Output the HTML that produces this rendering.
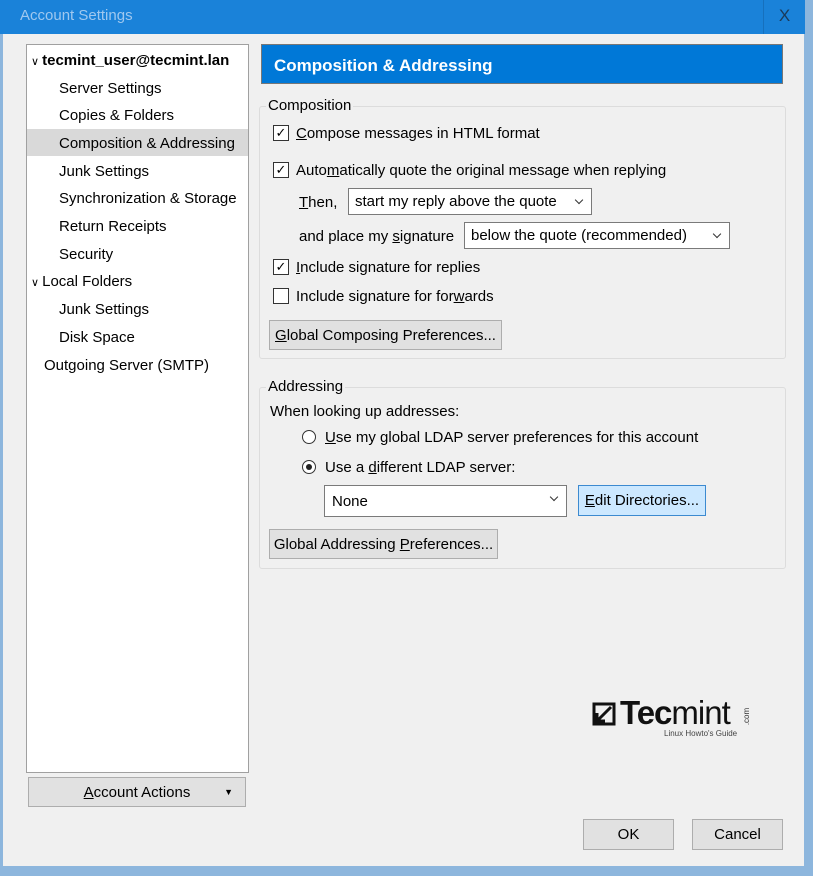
<!DOCTYPE html>
<html><head><style>
*{box-sizing:border-box;margin:0;padding:0}
body{width:816px;height:876px;position:relative;overflow:hidden;background:#fff;font-family:"Liberation Sans",sans-serif;font-size:15px;color:#000}
.a{position:absolute}
.win{left:0;top:0;width:813px;height:876px;background:#8db6dd}
.inner{left:3px;top:34px;width:801px;height:832px;background:#f0f0f0}
.title{left:0;top:0;width:805px;height:34px;background:#1a82d9;color:#9fc8ef;font-size:15px;padding:7px 0 0 20px}
.close{left:763px;top:0;width:42px;height:34px;border-left:1px solid #1670bd;color:#1a3a5a;font-size:17px;text-align:center;padding-top:6px}
.tree{left:26px;top:44px;width:223px;height:729px;background:#fff;border:1px solid #a0a0a0}
.ti{position:absolute;left:0;width:221px;height:27px;line-height:29px;white-space:nowrap}
.btn{position:absolute;background:#e1e1e1;border:1px solid #adadad;text-align:center;line-height:29px}
.hdr{left:261px;top:44px;width:522px;height:40px;background:#0078d7;border:1px solid #777;color:#fff;font-weight:bold;font-size:17px;padding:11px 0 0 12px}
.grp{position:absolute;border:1px solid #dcdcdc;border-radius:3px}
.leg{position:absolute;background:#f0f0f0;padding:0 2px}
.cb{position:absolute;width:16px;height:16px;border:1px solid #333;background:#fff;font-size:13px;line-height:14px;text-align:center}
.sel{position:absolute;background:#fff;border:1px solid #7a7a7a;height:27px;line-height:26px;padding-left:6px;white-space:nowrap}
.sel:after{content:"";position:absolute;right:9px;top:8px;width:5px;height:5px;border-right:1.5px solid #333;border-bottom:1.5px solid #333;transform:rotate(45deg)}
.rd{position:absolute;width:14px;height:14px;border:1px solid #333;border-radius:50%;background:#fff}
.t{position:absolute;white-space:nowrap}
u{text-decoration:underline}
</style></head><body>
<div class="a win"></div>
<div class="a inner"></div>
<div class="a title">Account Settings</div>
<div class="a close">X</div>
<div class="a tree">
<div class="ti" style="top:1px;left:4px;font-weight:bold"><span style="font-weight:normal;font-size:11px">&#8744; </span>tecmint_user@tecmint.lan</div>
<div class="ti" style="top:29px;padding-left:32px">Server Settings</div>
<div class="ti" style="top:56px;padding-left:32px">Copies &amp; Folders</div>
<div class="ti" style="top:84px;padding-left:32px;background:#d9d9d9">Composition &amp; Addressing</div>
<div class="ti" style="top:112px;padding-left:32px">Junk Settings</div>
<div class="ti" style="top:139px;padding-left:32px">Synchronization &amp; Storage</div>
<div class="ti" style="top:167px;padding-left:32px">Return Receipts</div>
<div class="ti" style="top:195px;padding-left:32px">Security</div>
<div class="ti" style="top:222px;left:4px"><span style="font-size:11px">&#8744; </span>Local Folders</div>
<div class="ti" style="top:250px;padding-left:32px">Junk Settings</div>
<div class="ti" style="top:278px;padding-left:32px">Disk Space</div>
<div class="ti" style="top:306px;padding-left:17px">Outgoing Server (SMTP)</div>
</div>
<div class="btn" style="left:28px;top:777px;width:218px;height:30px"><u>A</u>ccount Actions<span style="position:absolute;right:12px;font-size:9px">&#9660;</span></div>
<div class="a hdr">Composition &amp; Addressing</div>

<div class="grp" style="left:259px;top:106px;width:527px;height:253px"></div>
<div class="leg" style="left:266px;top:97px">Composition</div>
<div class="cb" style="left:273px;top:125px">&#10003;</div><div class="t" style="left:296px;top:125px"><u>C</u>ompose messages in HTML format</div>
<div class="cb" style="left:273px;top:162px">&#10003;</div><div class="t" style="left:296px;top:162px">Auto<u>m</u>atically quote the original message when replying</div>
<div class="t" style="left:299px;top:194px"><u>T</u>hen,</div>
<div class="sel" style="left:348px;top:188px;width:244px">start my reply above the quote</div>
<div class="t" style="left:299px;top:228px">and place my <u>s</u>ignature</div>
<div class="sel" style="left:464px;top:222px;width:266px">below the quote (recommended)</div>
<div class="cb" style="left:273px;top:259px">&#10003;</div><div class="t" style="left:296px;top:259px"><u>I</u>nclude signature for replies</div>
<div class="cb" style="left:273px;top:288px"></div><div class="t" style="left:296px;top:288px">Include signature for for<u>w</u>ards</div>
<div class="btn" style="left:269px;top:320px;width:233px;height:30px"><u>G</u>lobal Composing Preferences...</div>

<div class="grp" style="left:259px;top:387px;width:527px;height:182px"></div>
<div class="leg" style="left:266px;top:378px">Addressing</div>
<div class="t" style="left:270px;top:403px">When looking up addresses:</div>
<div class="rd" style="left:302px;top:430px"></div><div class="t" style="left:325px;top:429px"><u>U</u>se my global LDAP server preferences for this account</div>
<div class="rd" style="left:302px;top:460px"><div style="position:absolute;left:3px;top:3px;width:6px;height:6px;border-radius:50%;background:#222"></div></div><div class="t" style="left:325px;top:459px">Use a <u>d</u>ifferent LDAP server:</div>
<div class="sel" style="left:324px;top:485px;width:243px;height:32px;line-height:31px;padding-left:7px">None</div>
<div class="btn" style="left:578px;top:485px;width:128px;height:31px;background:#cce8ff;border-color:#3c8ad0"><u>E</u>dit Directories...</div>
<div class="btn" style="left:269px;top:529px;width:229px;height:30px">Global Addressing <u>P</u>references...</div>

<svg class="a" style="left:592px;top:702px" width="24" height="24" viewBox="0 0 24 24"><rect x="2" y="2" width="20" height="20" fill="none" stroke="#111" stroke-width="3"/><path d="M19 5 L5 19 M5 11 V19 H13" fill="none" stroke="#111" stroke-width="3"/></svg>
<div class="t" style="left:620px;top:694px;font-size:33px;font-weight:bold;letter-spacing:-1px;color:#111">Tec<span style="font-weight:normal">mint</span></div>
<div class="t" style="left:664px;top:729px;font-size:8px;color:#444">Linux Howto's Guide</div>
<div class="t" style="left:738px;top:712px;font-size:8px;color:#333;transform:rotate(-90deg)">.com</div>

<div class="btn" style="left:583px;top:819px;width:91px;height:31px">OK</div>
<div class="btn" style="left:692px;top:819px;width:91px;height:31px">Cancel</div>
</body></html>
